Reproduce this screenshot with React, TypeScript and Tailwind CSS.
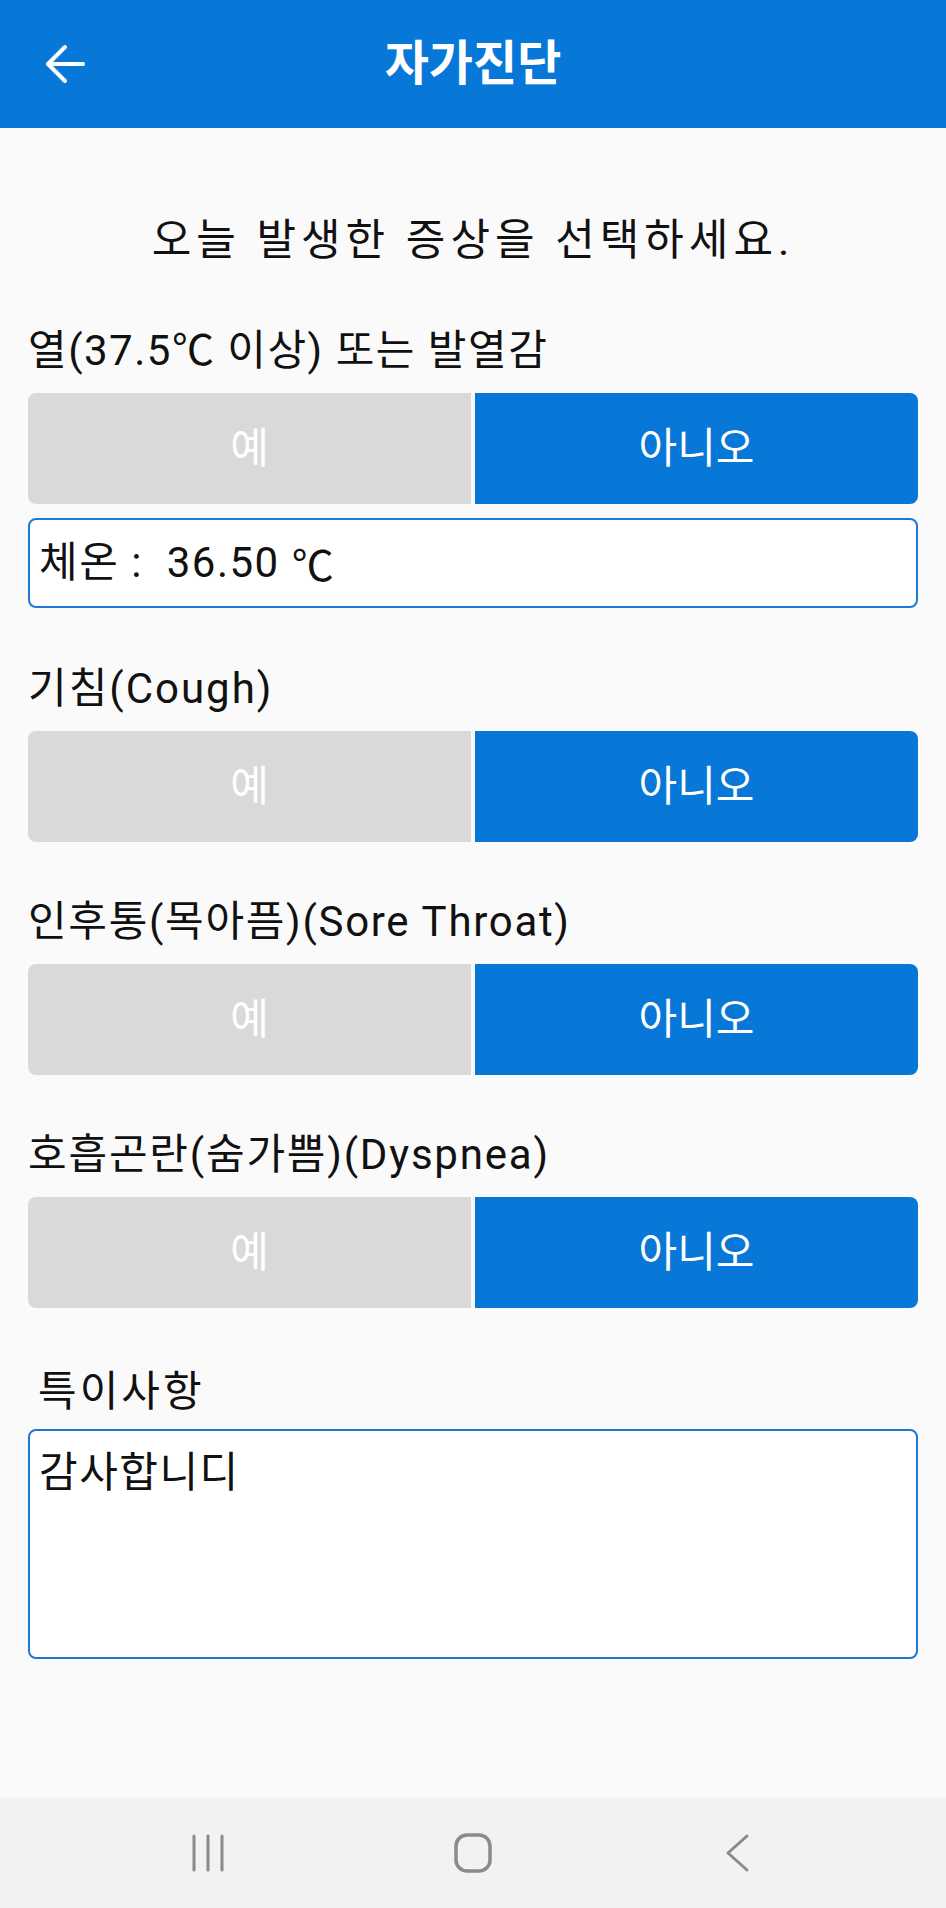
import React from "react";

function YesNo() {
  return (
    <div className="grid grid-cols-2 gap-[4px] h-[111px]">
      <div className="flex items-center justify-center bg-[#d9d9d9] rounded-l-[8px] text-white text-[42px] leading-[48px]">
        예
      </div>
      <div className="flex items-center justify-center bg-[#0777d8] rounded-r-[8px] text-white text-[42px] leading-[48px]">
        아니오
      </div>
    </div>
  );
}

function Label({ children, className = "" }: { children: React.ReactNode; className?: string }) {
  return (
    <div className={"h-[48px] text-[42px] leading-[48px] text-[#111] " + className}>{children}</div>
  );
}

const Celsius = () => <span className="font-['Noto_Sans_CJK_KR',sans-serif] leading-[0px]">℃</span>;

export default function App() {
  return (
    <div className="min-h-[1908px] w-full flex flex-col bg-[#fafafa] font-[Roboto,'Noto_Sans_CJK_KR',sans-serif]">
      <header className="h-[128px] bg-[#0777d8] grid grid-cols-[1fr_auto_1fr] items-center">
        <div className="pl-[45px] flex items-center">
          <svg width="40" height="40" viewBox="0 0 40 40" fill="none" stroke="white" strokeWidth="4" strokeLinecap="round" strokeLinejoin="round">
            <path d="M3 20 H38" />
            <path d="M20 3 L3 20 L20 37" />
          </svg>
        </div>
        <div className="text-white text-[48px] font-bold leading-[56px]">자가진단</div>
        <div />
      </header>

      <main className="px-[28px]">
        <div className="mt-[88px] text-center text-[43px] leading-[48px] tracking-[5px] text-[#111]">
          오늘 발생한 증상을 선택하세요.
        </div>

        <div className="mt-[63px]">
          <Label className="mb-[18px] tracking-[1.5px]">
            열(37.5<Celsius /> 이상) 또는 발열감
          </Label>
          <YesNo />
          <div className="mt-[14px] h-[90px] border-2 border-[#1a7bd6] rounded-[8px] bg-white flex items-center px-[9px] text-[42px] leading-[48px] tracking-[1.5px] text-[#111] whitespace-pre">
            {"체온 :  36.50 "}
            <Celsius />
          </div>
        </div>

        <div className="mt-[57px]">
          <Label className="mb-[18px] tracking-[2px]">기침(Cough)</Label>
          <YesNo />
        </div>

        <div className="mt-[56px]">
          <Label className="mb-[18px] tracking-[1.7px]">인후통(목아픔)(Sore Throat)</Label>
          <YesNo />
        </div>

        <div className="mt-[56px]">
          <Label className="mb-[18px] tracking-[1.8px]">호흡곤란(숨가쁨)(Dyspnea)</Label>
          <YesNo />
        </div>

        <div className="mt-[60px]">
          <Label className="pl-[10px] mb-[13px] tracking-[3px]">특이사항</Label>
          <div className="h-[230px] border-2 border-[#1a7bd6] rounded-[8px] bg-white pt-[18px] px-[9px] text-[42px] leading-[48px] tracking-[1.5px] text-[#111]">
            감사합니디
          </div>
        </div>
      </main>

      <nav className="mt-auto h-[111px] bg-[#f2f2f2] flex items-center justify-center">
        <div className="w-[265px] flex justify-center">
          <svg width="36" height="40" viewBox="0 0 36 40" fill="none" stroke="#8a8a8a" strokeWidth="3" strokeLinecap="round">
            <path d="M4 3 V37" />
            <path d="M18 3 V37" />
            <path d="M32 3 V37" />
          </svg>
        </div>
        <div className="w-[265px] flex justify-center">
          <svg width="40" height="42" viewBox="0 0 40 42" fill="none" stroke="#8a8a8a" strokeWidth="3.5">
            <rect x="3" y="3" width="34" height="36" rx="11" />
          </svg>
        </div>
        <div className="w-[265px] flex justify-center">
          <svg width="30" height="40" viewBox="0 0 30 40" fill="none" stroke="#8a8a8a" strokeWidth="3" strokeLinecap="round" strokeLinejoin="round">
            <path d="M24 3 L5 20 L24 37" />
          </svg>
        </div>
      </nav>
    </div>
  );
}
